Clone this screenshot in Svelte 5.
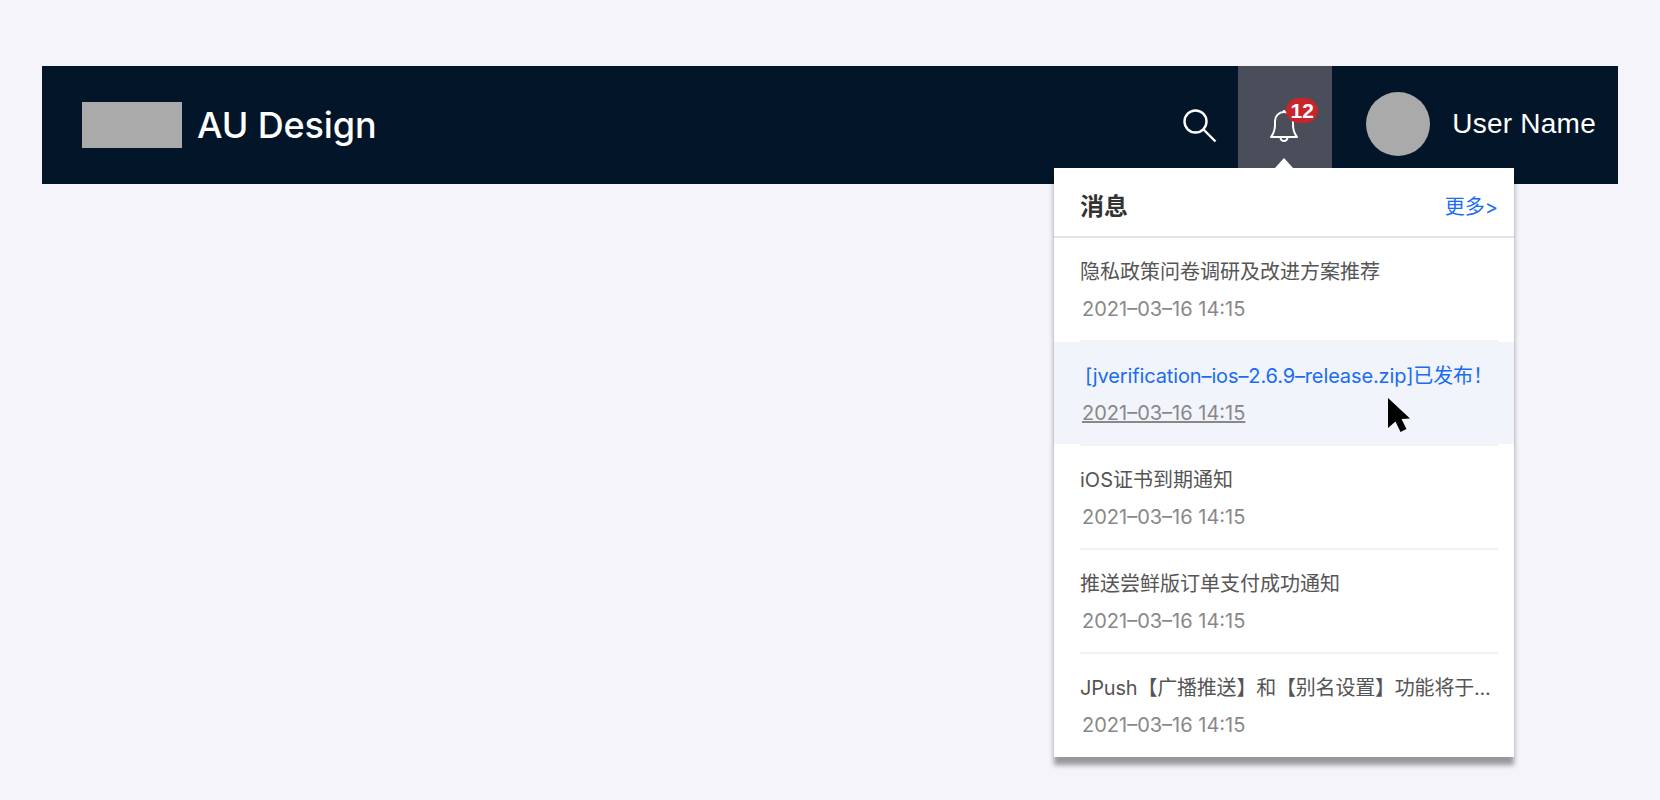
<script>
  const time = '2021–03–16 14:15';
  const items = [
    { title: '隐私政策问卷调研及改进方案推荐' },
    { title: '[jverification–ios–2.6.9–release.zip]已发布！', active: true },
    { title: 'iOS证书到期通知' },
    { title: '推送尝鲜版订单支付成功通知' },
    { title: 'JPush【广播推送】和【别名设置】功能将于...' }
  ];
</script>

<div class="page">
  <header class="bar">
    <div class="logo"></div>
    <div class="brand">AU Design</div>
    <div class="right">
      <svg class="search" viewBox="0 0 34 34" width="34" height="34" fill="none" stroke="#fff" stroke-width="2.4">
        <circle cx="12.5" cy="12.5" r="11" />
        <path d="M20.5 20.5 L32.5 32.5" />
      </svg>
      <div class="bell">
        <svg viewBox="0 0 30 34" width="30" height="34" fill="none" stroke="#fff" stroke-width="2" stroke-linejoin="round">
          <path d="M2 28 C5 24 6 20 6 16 V12 C6 7 10 3 15 3 C20 3 24 7 24 12 V16 C24 20 25 24 28 28 Z" />
          <path d="M11.5 28.5 a3.5 3.5 0 0 0 7 0" />
          <circle cx="15" cy="2.5" r="1.4" fill="#fff" stroke="none" />
        </svg>
        <span class="badge">12</span>
        <span class="arrow"></span>
      </div>
      <div class="avatar"></div>
      <div class="name">User Name</div>
    </div>

    <div class="panel">
      <div class="head">
        <span class="head-title">消息</span>
        <span class="more">更多&gt;</span>
      </div>
      {#each items as item, i}
        {#if i > 0}<div class="sep"></div>{/if}
        <div class="item" class:active={item.active}>
          <div class="title">{item.title}</div>
          <div class="time">{time}</div>
        </div>
      {/each}
      <svg class="cursor" viewBox="0 0 24 36" width="24" height="36">
        <path d="M1 1 L23 21.5 L14.5 22 L19.5 32 L13.5 35 L8.5 24.5 L1 31 Z" fill="#000" />
      </svg>
    </div>
  </header>
</div>

<style>
  :global(body) {
    margin: 0;
    background: #f4f4fa;
  }
  .page {
    height: 800px;
    padding: 66px 42px 0;
    box-sizing: border-box;
    font-family: Inter, "Noto Sans CJK SC", sans-serif;
    overflow: hidden;
  }
  .bar {
    position: relative;
    height: 118px;
    background: #021529;
    display: flex;
    align-items: center;
    padding-left: 40px;
    box-sizing: border-box;
    color: #fff;
  }
  .logo {
    width: 100px;
    height: 46px;
    background: #aaa;
    margin-right: 15px;
  }
  .brand {
    font-size: 36px;
    font-weight: 500;
    line-height: 46px;
    letter-spacing: -0.12px;
  }
  .right {
    margin-left: auto;
    display: flex;
    align-items: center;
    height: 100%;
  }
  .search {
    margin: 2px 21px 0 0;
  }
  .bell {
    position: relative;
    width: 94px;
    height: 102px;
    align-self: flex-start;
    background: #4a4e5a;
    box-sizing: border-box;
    padding: 43px 0 0 31px;
  }
  .bell svg {
    display: block;
  }
  .badge {
    position: absolute;
    left: 48px;
    top: 32px;
    width: 32px;
    height: 25px;
    border-radius: 13px;
    background: #c8242c;
    color: #fff;
    font-family: "Liberation Sans", sans-serif;
    font-size: 21px;
    font-weight: 700;
    line-height: 25px;
    text-align: center;
  }
  .arrow {
    position: absolute;
    left: 37px;
    bottom: 0;
    width: 0;
    height: 0;
    border-left: 9px solid transparent;
    border-right: 9px solid transparent;
    border-bottom: 10px solid #fff;
  }
  .avatar {
    width: 64px;
    height: 64px;
    border-radius: 50%;
    background: #aaa;
    margin: -2px 22px 0 34px;
  }
  .name {
    font-family: "Liberation Sans", sans-serif;
    font-size: 28px;
    line-height: 36px;
    letter-spacing: 0.25px;
    margin: -3px 22px 0 0;
    white-space: nowrap;
  }
  .panel {
    position: absolute;
    top: 102px;
    right: 104px;
    width: 460px;
    height: 589px;
    background: #fff;
    box-shadow: 0 8px 5px rgba(0, 0, 0, 0.38);
  }
  .head {
    height: 64px;
    border-bottom: 2px solid #e4e4e8;
    display: flex;
    justify-content: space-between;
    align-items: center;
    padding: 4px 16px 0 26px;
  }
  .head-title {
    font-size: 24px;
    font-weight: 700;
    color: #333;
  }
  .more {
    font-size: 20px;
    color: #1a6cf0;
    margin-top: 2px;
  }
  .item {
    padding: 20px 16px 16px 26px;
    height: 102px;
    box-sizing: border-box;
  }
  .item.active {
    background: #f1f4fb;
  }
  .sep {
    height: 2px;
    margin: 0 16px 0 26px;
    background: #f2f2f5;
  }
  .title {
    font-size: 20px;
    line-height: 28px;
    color: #555;
    white-space: nowrap;
  }
  .item:last-of-type .title {
    letter-spacing: -0.2px;
  }
  .time {
    margin: 9px 0 0 2px;
    font-size: 20px;
    line-height: 28px;
    color: #888;
    white-space: nowrap;
  }
  .active .title {
    color: #1a6cf0;
    padding-left: 5px;
    letter-spacing: -0.12px;
  }
  .active .time {
    text-decoration: underline;
  }
  .cursor {
    position: absolute;
    left: 333px;
    top: 229px;
  }
</style>
